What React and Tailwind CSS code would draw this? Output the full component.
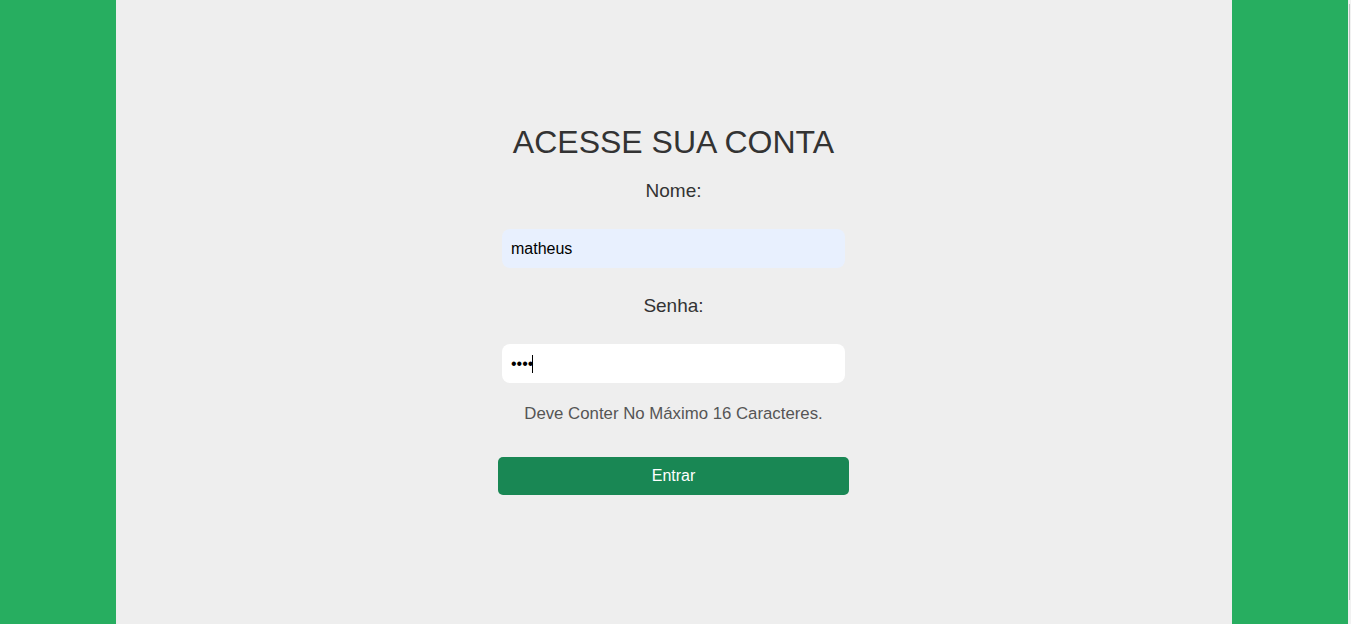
export default function App() {
  return (
    <div className="flex h-[624px] w-[1351px] overflow-hidden bg-[#27ae60]" style={{ fontFamily: '"Liberation Sans", Arial, sans-serif' }}>
      <div className="w-[116px] shrink-0 bg-[#27ae60]" />
      <div className="flex w-[1116px] shrink-0 flex-col items-center bg-[#eeeeee] pr-[1px]">
        <h1 className="mt-[124px] h-[37px] text-[32px] leading-[37px] text-[#333333]">ACESSE SUA CONTA</h1>
        <label className="mt-[19px] h-[22px] text-[19px] leading-[22px] text-[#333333]">Nome:</label>
        <input
          readOnly
          value="matheus"
          className="mt-[27px] h-[39px] w-[343px] rounded-[8px] bg-[#e8f0fe] px-[9px] text-[16px] text-black outline-none"
          style={{ fontFamily: '"Liberation Sans", Arial, sans-serif' }}
        />
        <label className="mt-[27px] h-[22px] text-[19px] leading-[22px] text-[#333333]">Senha:</label>
        <div className="relative mt-[27px] h-[39px] w-[343px]">
          <input
            readOnly
            type="password"
            value="abcd"
            className="h-[39px] w-[343px] rounded-[8px] bg-white px-[9px] text-[16px] text-black outline-none"
            style={{ fontFamily: '"Liberation Sans", Arial, sans-serif' }}
          />
          <span className="absolute left-[30px] top-[11px] h-[18px] w-px bg-black" />
        </div>
        <p className="mt-[21px] h-[20px] text-[16.8px] leading-[20px] text-[#555555]">Deve Conter No Máximo 16 Caracteres.</p>
        <button className="mt-[33px] h-[38px] w-[351px] rounded-[5px] bg-[#198754] text-[16px] text-white">Entrar</button>
      </div>
      <div className="w-[116px] shrink-0 bg-[#27ae60]" />
      <div className="flex w-[3px] shrink-0 justify-center bg-[#f1f1f1]">
        <div className="mt-[4px] h-[596px] w-px bg-[#c1c1c1]" />
      </div>
    </div>
  );
}
